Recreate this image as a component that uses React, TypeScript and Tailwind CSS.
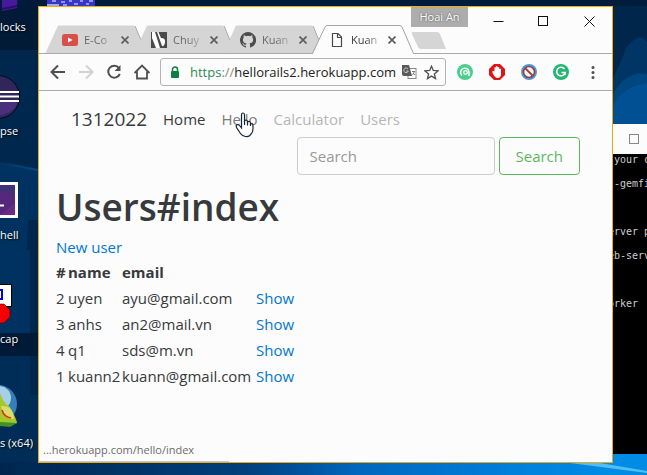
import type { ReactNode } from "react";

const users = [
  { id: 2, name: "uyen", email: "ayu@gmail.com" },
  { id: 3, name: "anhs", email: "an2@mail.vn" },
  { id: 4, name: "q1", email: "sds@m.vn" },
  { id: 1, name: "kuann2", email: "kuann@gmail.com" },
];

const consoleLines = [
  " your c", "", "--gemfi", "", "", "", "erver p", "", "eb-serv", "", "", "", "orker",
];

function Wallpaper() {
  return (
    <svg className="absolute inset-0 h-full w-full" viewBox="0 0 647 475" preserveAspectRatio="none" aria-hidden="true">
      <defs>
        <linearGradient id="floor" x1="0" x2="1" y1="0" y2="0">
          <stop offset="0" stopColor="#00264f" />
          <stop offset="0.38" stopColor="#003f7d" />
          <stop offset="0.55" stopColor="#0066bd" />
          <stop offset="0.8" stopColor="#0080dc" />
          <stop offset="1" stopColor="#0090ea" />
        </linearGradient>
      </defs>
      <rect width="647" height="475" fill="#00264c" />
      <path d="M0 0H647V6H0Z" fill="#001c3d" />
      <path d="M0 0H40V50H0Z" fill="#001a37" />
      <path d="M0 58H34V110H40V160H0Z" fill="#00284f" />
      <path d="M0 162Q20 163 40 170V345H0Z" fill="#003261" />
      <path d="M0 163L40 169V172Z" fill="#00437d" />
      <path d="M28 220H40V345H30V250H27Z" fill="#00264c" />
      <path d="M0 333H40V356H0Z" fill="#001a38" />
      <path d="M0 356H30V395H40V475H0Z" fill="#002d57" />
      <path d="M612 80Q622 60 626 48Q640 30 647 42V130H612Z" fill="#003566" />
      <path d="M612 96Q625 70 647 74V130H612Z" fill="#00467f" />
      <path d="M612 110Q618 88 647 83V130H612Z" fill="#005093" />
      <path d="M0 462H647V475H0Z" fill="url(#floor)" />
      <path d="M612 453H647V475H600Z" fill="#008ce4" />
      <path d="M570 463L600 463L647 471V473Z" fill="#51bdf2" />
    </svg>
  );
}

function DesktopIcon({ label, children }: { label: string; children: ReactNode }) {
  return (
    <button type="button" className="flex h-[104px] w-9 flex-col items-start justify-end text-left">
      {children}
      <span className="h-[26px] whitespace-nowrap pt-px text-[11px] leading-5 text-white [text-shadow:1px_1px_2px_#000]">{label}</span>
    </button>
  );
}

function DesktopIcons() {
  return (
    <nav aria-label="Desktop" className="absolute -top-[62px] left-0 flex flex-col">
      <DesktopIcon label="locks">
        <svg width="36" height="60" viewBox="0 0 36 60" aria-hidden="true">
          <path d="M2 30H18L17 52L2 55Z" fill="#461a9e" />
          <path d="M2 54L17 51V49L2 52Z" fill="#2d0b70" />
        </svg>
      </DesktopIcon>
      <DesktopIcon label="pse">
        <svg width="36" height="60" viewBox="0 0 36 60" aria-hidden="true">
          <circle cx="-2" cy="37" r="21.500" fill="#30265a" stroke="#0a0718" />
          <path d="M-2 41H18Q15 53 -2 56Z" fill="#48307c" />
          <path d="M0 32H19M0 36.500H19M0 41H19" stroke="#fff" strokeWidth="2" />
        </svg>
      </DesktopIcon>
      <DesktopIcon label="hell">
        <svg width="36" height="60" viewBox="0 0 36 60" aria-hidden="true">
          <rect x="-20" y="18" width="38" height="36" fill="#fff" />
          <rect x="-18" y="21" width="33" height="30" fill="#55287c" />
          <path d="M0 21H15V31L0 27Z" fill="#403278" />
          <path d="M0 51L15 39V51Z" fill="#6b2a88" />
          <path d="M0 41.500H4" stroke="#fff" strokeWidth="2" />
        </svg>
      </DesktopIcon>
      <DesktopIcon label="cap">
        <svg width="36" height="60" viewBox="0 0 36 60" aria-hidden="true">
          <rect x="-14" y="16.500" width="25.500" height="22" fill="#fff" stroke="#000" />
          <path d="M-8 22H2V31H-8" fill="none" stroke="#0000e0" strokeWidth="2" />
          <path d="M-4 36H4L10 42V49L4 55H-4Z" fill="#f80000" stroke="#300" strokeWidth="0.500" />
        </svg>
      </DesktopIcon>
      <DesktopIcon label="s (x64)">
        <svg width="36" height="60" viewBox="0 0 36 60" aria-hidden="true">
          <circle cx="-2" cy="32" r="19" fill="#357fb8" />
          <circle cx="-1" cy="26" r="12" fill="#a6cfe8" />
          <path d="M0 21Q3 31 10 35Q17 48 17 51L8 54H0Z" fill="#a5c82b" />
          <path d="M1 34Q13 33 14 47Q4 48 1 34Z" fill="#dddb6c" />
          <path d="M2 38Q4 45 11 46" fill="none" stroke="#e02820" strokeWidth="1.500" />
          <path d="M0 50L17 51L10 55L0 54Z" fill="#429125" />
        </svg>
      </DesktopIcon>
    </nav>
  );
}

function Close({ className }: { className?: string }) {
  return (
    <svg className={className} width="8" height="8" viewBox="0 0 8 8" aria-hidden="true">
      <path d="M0.500 0.500L7.500 7.500M7.500 0.500L0.500 7.500" stroke="#5f5f5f" strokeWidth="1.700" />
    </svg>
  );
}

function Tab({ title, active, children }: { title: string; active?: boolean; children: ReactNode }) {
  return (
    <div className={`relative -ml-[13px] flex h-[29px] w-[102px] shrink-0 items-center pl-[17px] ${active ? "z-10" : ""}`}>
      <svg className="absolute inset-0" width="102" height="29" viewBox="0 0 102 29" aria-hidden="true">
        <path
          d={active ? "M0.500 29L13 0.500H89L101.500 29Z" : "M0.500 28L13 0.500H89L101.500 28Z"}
          fill={active ? "#fcfcfc" : "#d5d5d5"}
        />
        <path
          d={active ? "M0 28.500H0.500L13 2Q14 0.500 15 0.500H88Q89 0.500 90 2L101.500 28.500" : "M90 1L101.500 28.500"}
          fill="none"
          stroke="#a3a3a3"
        />
      </svg>
      <button type="button" className="relative flex items-center gap-[6px]">
        {children}
        <span
          className={`w-7 overflow-hidden whitespace-nowrap bg-linear-to-r from-50% bg-clip-text text-left text-[11px] leading-5 text-transparent ${active ? "from-[#333333] to-[#cccccc]" : "from-[#636363] to-[#b8b8b8]"}`}
        >
          {title}
        </span>
      </button>
      <button type="button" aria-label={`Close ${title}`} className="relative ml-[9px]">
        <Close />
      </button>
    </div>
  );
}

function TabStrip() {
  return (
    <div className="flex h-[29px] pl-[19px]">
      <Tab title="E-Co">
        <svg width="16" height="16" viewBox="0 0 16 16" aria-hidden="true">
          <rect y="2" width="16" height="12" rx="2.500" fill="#d9504b" />
          <path d="M6 5.500L10.500 8L6 10.500Z" fill="#fff" />
        </svg>
      </Tab>
      <Tab title="Chuy">
        <svg width="16" height="16" viewBox="0 0 16 16" aria-hidden="true">
          <rect width="16" height="16" fill="#4a4a4a" />
          <path d="M1 0H4L9 16H5L1 6Z" fill="#fff" />
          <path d="M6 0H7.500L10 6Q15 6 14 11Q13 15 11 14Z" fill="#fff" />
        </svg>
      </Tab>
      <Tab title="Kuan">
        <svg width="16" height="16" viewBox="0 0 16 16" fill="#4c4c4c" aria-hidden="true">
          <path d="M8 0a8 8 0 0 0-2.530 15.590c.4.070.55-.17.550-.38v-1.490c-2.230.48-2.690-.95-2.690-.95-.36-.92-.89-1.170-.89-1.170-.73-.5.050-.49.050-.49.810.06 1.230.83 1.230.83.720 1.230 1.880.87 2.340.67.070-.52.280-.87.510-1.070-1.780-.2-3.650-.89-3.650-3.950 0-.87.310-1.590.83-2.150-.08-.2-.36-1.020.080-2.120 0 0 .67-.22 2.200.82a7.600 7.600 0 0 1 4 0c1.530-1.040 2.200-.82 2.200-.82.44 1.100.16 1.920.080 2.120.51.560.82 1.270.82 2.150 0 3.070-1.870 3.750-3.650 3.950.29.250.54.730.54 1.480v2.200c0 .21.150.46.550.38A8 8 0 0 0 8 0Z" />
        </svg>
      </Tab>
      <Tab title="Kuan" active>
        <svg width="16" height="16" viewBox="0 0 16 16" fill="none" stroke="#4a4a4a" strokeWidth="1.200" aria-hidden="true">
          <path d="M3.500 1.500H9L12.500 5V14.500H3.500ZM8.500 1.500V5.500H12.500" />
        </svg>
      </Tab>
      <button type="button" aria-label="New tab" className="-ml-[3px] mt-[7px] h-[17px]">
        <svg width="36" height="17" viewBox="0 0 36 17" aria-hidden="true">
          <path d="M2 0H26Q28 0 29 2L35 17H10Q8 17 7 15L1 2Q0 0 2 0Z" fill="#d5d5d5" />
        </svg>
      </button>
    </div>
  );
}

function TitleBar() {
  return (
    <div className="flex h-[18px] items-start justify-end">
      <span className="relative z-10 h-5 w-[57px] shrink-0 bg-[#adadad] text-center text-[11px] leading-5 text-white [text-shadow:0_0_2px_#444]">
        Hoai An
      </span>
      <div className="z-10 flex pl-[25px] pr-[17px] pt-[9px]">
        <button type="button" aria-label="Minimize" className="mr-[34px]">
          <svg width="11" height="11" viewBox="0 0 11 11"><path d="M0.500 5.500H10.500" stroke="#111" /></svg>
        </button>
        <button type="button" aria-label="Maximize" className="mr-[35px]">
          <svg width="11" height="11" viewBox="0 0 11 11"><rect x="0.500" y="0.500" width="9" height="9" fill="none" stroke="#111" /></svg>
        </button>
        <button type="button" aria-label="Close window">
          <svg width="11" height="11" viewBox="0 0 11 11"><path d="M0.500 0.500L10.500 10.500M10.500 0.500L0.500 10.500" stroke="#111" /></svg>
        </button>
      </div>
    </div>
  );
}

function Toolbar() {
  return (
    <div className="-mt-px flex h-[38px] items-center border-y border-[#ababab] pl-[11px] pr-[17px]">
      <div className="flex shrink-0 gap-3">
        <button type="button" aria-label="Back">
          <svg width="16" height="16" viewBox="0 0 16 16" fill="none" stroke="#505050" strokeWidth="2"><path d="M15 8H2M8 1.500L1.500 8L8 14.500" /></svg>
        </button>
        <button type="button" aria-label="Forward">
          <svg width="16" height="16" viewBox="0 0 16 16" fill="none" stroke="#d2d2d2" strokeWidth="2"><path d="M1 8H14M8 1.500L14.500 8L8 14.500" /></svg>
        </button>
        <button type="button" aria-label="Reload">
          <svg width="16" height="16" viewBox="0 0 16 16" fill="none" stroke="#505050" strokeWidth="2"><path d="M13 4A6 6 0 1 0 13.800 10" /><path d="M14.500 1V7H8.500Z" fill="#505050" stroke="none" /></svg>
        </button>
        <button type="button" aria-label="Home">
          <svg width="16" height="16" viewBox="0 0 16 16" fill="none" stroke="#505050" strokeWidth="1.800"><path d="M0.500 9L8 1.500L15.500 9M3 7.500V14.500H13V7.500" /></svg>
        </button>
      </div>
      <div className="ml-[10px] flex h-7 min-w-0 flex-1 items-center rounded-[3px] border border-[#b3b3b3] pl-[9px] pr-[6px]">
        <svg className="shrink-0" width="10" height="12" viewBox="0 0 10 12" aria-hidden="true">
          <rect x="1" y="5" width="8" height="7" rx="1" fill="#0b8043" />
          <path d="M2.500 5V3.500A2.500 2.500 0 0 1 7.500 3.500V5" fill="none" stroke="#0b8043" strokeWidth="1.500" />
        </svg>
        <div className="ml-[10px] min-w-0 flex-1 whitespace-nowrap text-[13px] leading-6 text-[#222222]">
          <span className="text-[#2b8a57]">https</span>
          <span className="text-[#888888]">://</span>hellorails2.herokuapp.com
        </div>
        <button type="button" aria-label="Translate" className="shrink-0">
          <svg width="15" height="14" viewBox="0 0 15 14">
            <rect x="6" y="3.500" width="8" height="10" fill="#fff" stroke="#888" />
            <path d="M0 0H7L10 11H2Q0 11 0 9Z" fill="#5a5a5a" />
            <path d="M6 4A2.300 2.300 0 1 0 6.300 6H4.300" fill="none" stroke="#ccc" />
            <path d="M10 6.500H13M12.500 6.500L10.500 10M11 8L13 10" fill="none" stroke="#777" />
          </svg>
        </button>
        <button type="button" aria-label="Bookmark" className="ml-[7px] shrink-0">
          <svg width="15" height="15" viewBox="0 0 15 15" fill="none" stroke="#505050" strokeWidth="1.300"><path d="M7.500 1.200L9.300 5.500L14 5.900L10.400 9L11.500 13.600L7.500 11.100L3.500 13.600L4.600 9L1 5.900L5.700 5.500Z" /></svg>
        </button>
      </div>
      <div className="ml-[11px] flex shrink-0 gap-4">
        <button type="button" aria-label="Assistant">
          <svg width="16" height="16" viewBox="0 0 16 16"><circle cx="8" cy="8" r="8" fill="#4bcf8c" /><path d="M5 11.500A4.200 4.200 0 1 1 12 8V12" fill="none" stroke="#fff" strokeWidth="1.500" /><circle cx="8.500" cy="8.500" r="1.800" fill="none" stroke="#fff" strokeWidth="1.300" /></svg>
        </button>
        <button type="button" aria-label="Ad blocker">
          <svg width="16" height="16" viewBox="0 0 16 16"><path d="M5 0H11L16 5V11L11 16H5L0 11V5Z" fill="#e01414" /><path d="M3.500 7Q5 6 5.500 8V3.500Q6.200 2.700 7 3.500V2.500Q7.800 1.500 8.600 2.500V3.500Q9.500 2.500 10.200 3.500V5Q11.500 4 12 5V10Q12 14 8.500 14Q6 14 3.500 9Z" fill="#fff" /></svg>
        </button>
        <button type="button" aria-label="Script blocker">
          <svg width="16" height="16" viewBox="0 0 16 16"><circle cx="8" cy="8" r="8" fill="#4b98dc" /><circle cx="8" cy="8" r="5.500" fill="#f4f4f4" stroke="#98413f" strokeWidth="1.600" /><path d="M4.500 4.500L11.500 11.500" stroke="#98413f" strokeWidth="1.800" /></svg>
        </button>
        <button type="button" aria-label="Grammar">
          <svg width="16" height="16" viewBox="0 0 16 16"><circle cx="8" cy="8" r="8" fill="#28b475" /><path d="M11.500 5A4.300 4.300 0 1 0 12.200 8.500H8.500M12 8.500V11" fill="none" stroke="#fff" strokeWidth="1.500" /></svg>
        </button>
      </div>
      <button type="button" aria-label="Menu" className="ml-[22px] shrink-0">
        <svg width="4" height="16" viewBox="0 0 4 16" fill="#505050"><circle cx="2" cy="3.500" r="1.500" /><circle cx="2" cy="8.500" r="1.500" /><circle cx="2" cy="13.500" r="1.500" /></svg>
      </button>
    </div>
  );
}

function Page() {
  return (
    <main className="text-[15px] text-[#373a3c]">
      <div className="px-8 pt-[10px]">
        <nav aria-label="Main" className="flex h-9 items-center">
          <a href="#root" className="mr-4 text-[19px]">1312022</a>
          <div className="flex gap-4">
            <a href="#home">Home</a>
            <span className="relative">
              <a href="#hello" className="text-[#7a7b7c]">Hello</a>
              <svg className="absolute left-[14px] top-[4px]" width="19" height="26" viewBox="0 0 19 26" aria-hidden="true">
                <path
                  d="M6.500 16V3Q6.500 1 8 1Q9.500 1 9.500 3V10V8.500Q12 7.500 12.500 9.500V10Q15 8.500 15.500 11V12Q18 11 18 13.500V17Q18 20 16 22Q14.500 25 10.500 24.500Q7 24 5.500 21.500L1.500 15.500Q0.500 13 2.500 12.500Q4 12.500 6.500 16Z"
                  fill="#fff"
                  stroke="#162438"
                  strokeWidth="1.200"
                />
                <path d="M9.500 9V13M12.500 10V13.500M15.500 11.500V14" stroke="#162438" strokeWidth="1.200" />
              </svg>
            </span>
            <a href="#calculator" className="text-[#b5b6b6]">Calculator</a>
            <a href="#users" className="text-[#b5b6b6]">Users</a>
          </div>
        </nav>
        <form className="flex justify-end gap-1" onSubmit={(event) => event.preventDefault()}>
          <input
            type="text"
            aria-label="Search"
            placeholder="Search"
            className="h-[38px] w-[198px] min-w-0 rounded border border-[#cccccc] bg-transparent px-3 outline-none placeholder:text-[#999999]"
          />
          <button type="submit" className="h-[38px] rounded border border-[#5cb85c] px-4 text-[#5cb85c]">Search</button>
        </form>
      </div>
      <div className="px-[17px] pt-2">
        <h1 className="text-[37px] font-semibold leading-[48px]">Users#index</h1>
        <a href="#new" className="mt-1 inline-block leading-6 text-[#0275d8]">New user</a>
        <table className="table-fixed border-collapse text-left">
          <colgroup>
            <col className="w-[12px]" />
            <col className="w-[54px]" />
            <col className="w-[134px]" />
            <col className="w-[42px]" />
          </colgroup>
          <thead>
            <tr className="h-[26px]">
              <th className="p-0">#</th>
              <th className="p-0">name</th>
              <th className="p-0">email</th>
              <td className="p-0" />
            </tr>
          </thead>
          <tbody>
            {users.map((user) => (
              <tr key={user.id} className="h-[26px]">
                <td className="p-0">{user.id}</td>
                <td className="p-0">{user.name}</td>
                <td className="p-0">{user.email}</td>
                <td className="p-0"><a href={`#user-${user.id}`} className="text-[#0275d8]">Show</a></td>
              </tr>
            ))}
          </tbody>
        </table>
      </div>
    </main>
  );
}

export default function App() {
  return (
    <div className="relative min-h-screen w-full overflow-hidden font-['Open_Sans','Noto_Sans',sans-serif]">
      <Wallpaper />
      <svg className="absolute left-[47px] top-0" width="48" height="6" viewBox="0 0 48 6" aria-hidden="true">
        <rect width="48" height="6" fill="#3636c8" />
        <path d="M0 4H12V6H0Z" fill="#a9a9d0" />
        <path d="M5 1H9M14 2H18M16 5H20M22 1H25M27 4H31M33 1H36M39 4H42M42 1H46" stroke="#b4b4f5" strokeWidth="1.500" />
      </svg>
      <DesktopIcons />

      <section aria-label="Console" className="absolute bottom-[21px] right-0 top-[124px] w-[39px] overflow-hidden bg-black">
        <div className="flex h-[30px] items-center bg-[#fcfcfc] pl-[21px]">
          <button type="button" aria-label="Maximize console" className="h-[10px] w-[10px] border border-[#888888]" />
        </div>
        <pre className="font-['DejaVu_Sans_Mono','Liberation_Mono',monospace] text-[10px] leading-[12px] text-[#cccccc]">{consoleLines.join("\n")}</pre>
      </section>

      <section
        aria-label="Browser"
        className="absolute bottom-[12px] left-[38px] right-[34px] top-[6px] flex flex-col border border-[#f5a80c] bg-[#fcfcfc]"
      >
        <TitleBar />
        <TabStrip />
        <Toolbar />
        <Page />
        <div className="mt-auto h-[22px] w-[190px] border-b border-[#c8c8c8] pl-1 text-[11px] leading-5 text-[#6b6b6b]">
          ...herokuapp.com/hello/index
        </div>
      </section>
    </div>
  );
}
